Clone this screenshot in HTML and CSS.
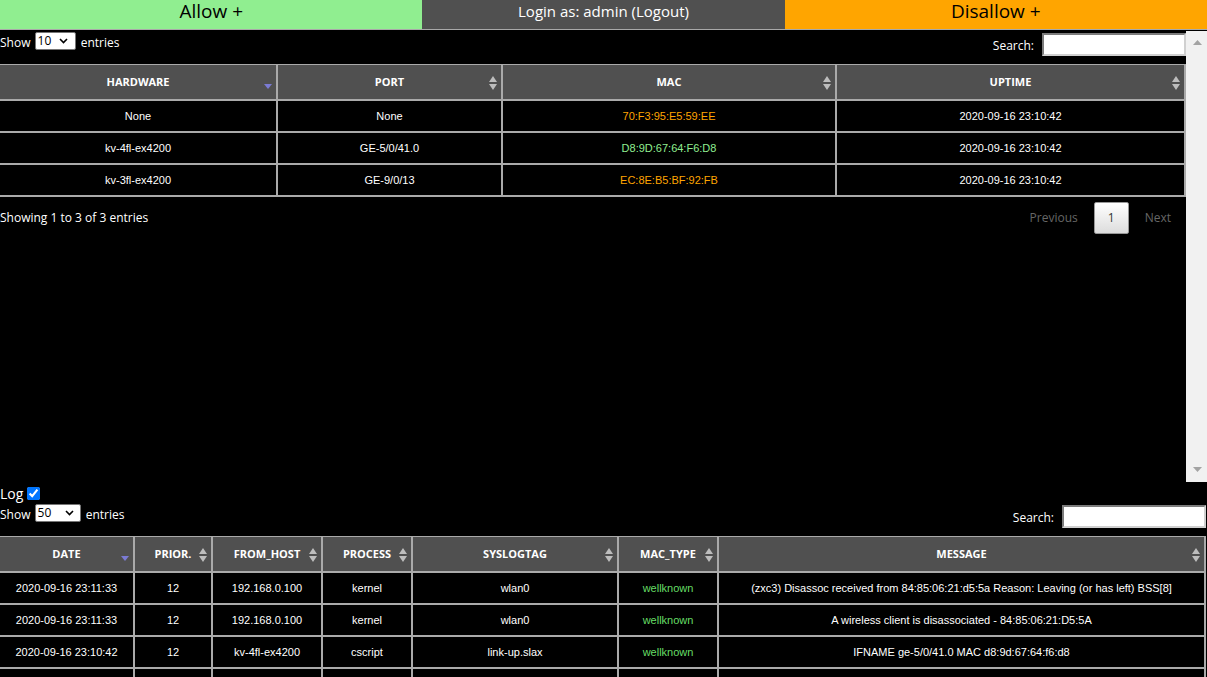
FILE: index.html
```html
<!DOCTYPE html>
<html>
<head>
<meta charset="utf-8">
<title>MAC control</title>
<link rel="stylesheet" href="styles.css">
</head>
<body>
<table class="topbar">
  <tr>
    <td class="allow">Allow +</td>
    <td class="login">Login as: admin (Logout)</td>
    <td class="disallow">Disallow +</td>
  </tr>
</table>

<div class="frame">
  <div class="frame-content">
    <div class="dt-controls">
      <div class="dt-length">Show
        <span class="sel sel-10"><select><option>10</option></select>
          <svg class="chev" width="9" height="6" viewBox="0 0 9 6"><path d="M1 1 L4.5 4.5 L8 1" fill="none" stroke="#000" stroke-width="1.6"/></svg>
        </span> entries</div>
      <div class="dt-filter"><label>Search:</label><input type="search"></div>
    </div>
    <table class="dt t1">
      <colgroup><col style="width:278px"><col style="width:225px"><col style="width:334px"><col style="width:349px"></colgroup>
      <thead>
        <tr>
          <th>HARDWARE<span class="sort"><svg width="8" height="14" viewBox="0 0 8 14"><path d="M0 8 H8 L4 13 Z" fill="#7b7bd4"/></svg></span></th>
          <th>PORT<span class="sort"><svg width="8" height="14" viewBox="0 0 8 14"><path d="M4 0 L8 6 H0 Z M0 8 H8 L4 14 Z" fill="#bdbdbd"/></svg></span></th>
          <th>MAC<span class="sort"><svg width="8" height="14" viewBox="0 0 8 14"><path d="M4 0 L8 6 H0 Z M0 8 H8 L4 14 Z" fill="#bdbdbd"/></svg></span></th>
          <th>UPTIME<span class="sort"><svg width="8" height="14" viewBox="0 0 8 14"><path d="M4 0 L8 6 H0 Z M0 8 H8 L4 14 Z" fill="#bdbdbd"/></svg></span></th>
        </tr>
      </thead>
      <tbody>
        <tr><td>None</td><td>None</td><td class="orange">70:F3:95:E5:59:EE</td><td>2020-09-16 23:10:42</td></tr>
        <tr><td>kv-4fl-ex4200</td><td>GE-5/0/41.0</td><td class="green">D8:9D:67:64:F6:D8</td><td>2020-09-16 23:10:42</td></tr>
        <tr><td>kv-3fl-ex4200</td><td>GE-9/0/13</td><td class="orange">EC:8E:B5:BF:92:FB</td><td>2020-09-16 23:10:42</td></tr>
      </tbody>
    </table>
    <div class="dt-footer">
      <div class="dt-info">Showing 1 to 3 of 3 entries</div>
      <div class="dt-paginate">
        <span class="pg disabled">Previous</span><span class="pg current">1</span><span class="pg disabled">Next</span>
      </div>
    </div>
  </div>
  <div class="scrollbar">
    <svg width="9" height="5" viewBox="0 0 9 5"><path d="M4.5 0 L9 5 H0 Z" fill="#a3a3a3"/></svg>
    <svg width="9" height="5" viewBox="0 0 9 5"><path d="M0 0 H9 L4.5 5 Z" fill="#a3a3a3"/></svg>
  </div>
</div>

<div class="log-line">Log <input type="checkbox" checked></div>
<div class="dt-controls wide">
  <div class="dt-length">Show
    <span class="sel sel-50"><select><option>50</option></select>
      <svg class="chev" width="9" height="6" viewBox="0 0 9 6"><path d="M1 1 L4.5 4.5 L8 1" fill="none" stroke="#000" stroke-width="1.6"/></svg>
    </span> entries</div>
  <div class="dt-filter"><label>Search:</label><input type="search"></div>
</div>
<table class="dt t2">
  <colgroup><col style="width:135px"><col style="width:78px"><col style="width:110px"><col style="width:90px"><col style="width:206px"><col style="width:100px"><col style="width:487px"></colgroup>
  <thead>
    <tr>
      <th>DATE<span class="sort"><svg width="8" height="14" viewBox="0 0 8 14"><path d="M0 8 H8 L4 13 Z" fill="#7b7bd4"/></svg></span></th>
      <th>PRIOR.<span class="sort"><svg width="8" height="14" viewBox="0 0 8 14"><path d="M4 0 L8 6 H0 Z M0 8 H8 L4 14 Z" fill="#bdbdbd"/></svg></span></th>
      <th>FROM_HOST<span class="sort"><svg width="8" height="14" viewBox="0 0 8 14"><path d="M4 0 L8 6 H0 Z M0 8 H8 L4 14 Z" fill="#bdbdbd"/></svg></span></th>
      <th>PROCESS<span class="sort"><svg width="8" height="14" viewBox="0 0 8 14"><path d="M4 0 L8 6 H0 Z M0 8 H8 L4 14 Z" fill="#bdbdbd"/></svg></span></th>
      <th>SYSLOGTAG<span class="sort"><svg width="8" height="14" viewBox="0 0 8 14"><path d="M4 0 L8 6 H0 Z M0 8 H8 L4 14 Z" fill="#bdbdbd"/></svg></span></th>
      <th>MAC_TYPE<span class="sort"><svg width="8" height="14" viewBox="0 0 8 14"><path d="M4 0 L8 6 H0 Z M0 8 H8 L4 14 Z" fill="#bdbdbd"/></svg></span></th>
      <th>MESSAGE<span class="sort"><svg width="8" height="14" viewBox="0 0 8 14"><path d="M4 0 L8 6 H0 Z M0 8 H8 L4 14 Z" fill="#bdbdbd"/></svg></span></th>
    </tr>
  </thead>
  <tbody>
    <tr><td>2020-09-16 23:11:33</td><td>12</td><td>192.168.0.100</td><td>kernel</td><td>wlan0</td><td class="green2">wellknown</td><td>(zxc3) Disassoc received from 84:85:06:21:d5:5a Reason: Leaving (or has left) BSS[8]</td></tr>
    <tr><td>2020-09-16 23:11:33</td><td>12</td><td>192.168.0.100</td><td>kernel</td><td>wlan0</td><td class="green2">wellknown</td><td>A wireless client is disassociated - 84:85:06:21:D5:5A</td></tr>
    <tr><td>2020-09-16 23:10:42</td><td>12</td><td>kv-4fl-ex4200</td><td>cscript</td><td>link-up.slax</td><td class="green2">wellknown</td><td>IFNAME ge-5/0/41.0 MAC d8:9d:67:64:f6:d8</td></tr>
    <tr><td>&nbsp;</td><td>&nbsp;</td><td>&nbsp;</td><td>&nbsp;</td><td>&nbsp;</td><td>&nbsp;</td><td>&nbsp;</td></tr>
  </tbody>
</table>
</body>
</html>
```

FILE: styles.css
```css
* { box-sizing: border-box; }

html, body {
  margin: 0;
  padding: 0;
  background: #000;
  color: #fff;
  overflow: hidden;
  font-family: "Open Sans", "Noto Sans", sans-serif;
  font-size: 12px;
}

/* top bar */
.topbar {
  width: 100%;
  border-collapse: collapse;
  table-layout: fixed;
  border-bottom: 1px solid #a9a9a9;
}
.topbar td {
  height: 29px;
  padding: 0;
  text-align: center;
  vertical-align: top;
  line-height: 22px;
}
.allow { width: 35%; background: #90ee90; color: #000; font-size: 19px; }
.login { width: 30%; background: #505050; color: #fff; font-size: 15px; }
.disallow { width: 35%; background: #ffa500; color: #000; font-size: 19px; }

/* frame */
.frame {
  display: flex;
  height: 451px;
  margin-top: 1px;
}
.frame-content {
  width: 1186px;
  flex: none;
}
.scrollbar {
  width: 21px;
  background: #f1f1f1;
  display: flex;
  flex-direction: column;
  justify-content: space-between;
  align-items: center;
  padding: 9px 0 10px 1px;
}

/* datatables controls */
.dt-controls {
  display: flex;
  justify-content: space-between;
  align-items: flex-start;
  height: 33px;
  width: 1186px;
}
.dt-controls.wide { width: 1207px; padding-right: 1px; }
.dt-length {
  padding-top: 3px;
  line-height: 18px;
  white-space: nowrap;
}
.sel {
  position: relative;
  display: inline-block;
  vertical-align: top;
  height: 18px;
  margin: -2px 2px 0 1px;
}
.sel select {
  display: block;
  appearance: none;
  -webkit-appearance: none;
  height: 18px;
  border: 1px solid #767676;
  border-radius: 2px;
  background: #fff;
  color: #000;
  font-family: "Open Sans", "Noto Sans", sans-serif;
  font-size: 12px;
  padding: 0 0 0 2px;
  margin: 0;
  line-height: 16px;
}
.sel-10 select { width: 41px; }
.sel-50 select { width: 46px; }
.chev {
  position: absolute;
  top: 6px;
  pointer-events: none;
}
.sel-10 .chev { right: 8px; }
.sel-50 .chev { right: 7px; }

.dt-filter {
  display: flex;
  align-items: center;
  padding-top: 2px;
  gap: 8px;
}
.dt-filter label { position: relative; top: 1px; }
.dt-filter input {
  width: 144px;
  height: 23px;
  margin: 0;
  border: 2px inset #d0d0d0;
  background: #fff;
  padding: 0 2px;
}

/* tables */
.dt {
  border-collapse: separate;
  border-spacing: 0;
  table-layout: fixed;
}
.t1 { width: 1186px; }
.t2 { width: 1206px; }
.dt th {
  position: relative;
  height: 37px;
  padding: 0;
  background: #505050;
  color: #fff;
  font-family: "Open Sans", "Noto Sans", sans-serif;
  font-weight: bold;
  font-size: 11px;
  text-align: center;
  border-top: 1px solid #aaa;
  border-bottom: 2px solid #aaa;
  border-right: 2px solid #aaa;
}
.dt td {
  height: 32px;
  padding: 0;
  text-align: center;
  font-family: "Liberation Sans", Arial, sans-serif;
  font-size: 11px;
  color: #fff;
  border-bottom: 2px solid #aaa;
  border-right: 2px solid #aaa;
  white-space: nowrap;
}
.sort {
  position: absolute;
  right: 4px;
  top: 11px;
  line-height: 0;
}
.orange { color: #ffa500 !important; }
.green { color: #90ee90 !important; }
.green2 { color: #66dd66 !important; }

/* footer */
.dt-footer {
  display: flex;
  justify-content: space-between;
  align-items: flex-start;
}
.dt-info {
  padding-top: 12px;
  font-size: 12px;
}
.dt-paginate {
  display: flex;
  padding-top: 5px;
  padding-right: 1px;
}
.pg {
  display: inline-block;
  padding: 7px 13px;
  margin-left: 2px;
  border: 1px solid transparent;
  border-radius: 2px;
  line-height: 16px;
  font-size: 12px;
}
.pg.disabled { color: #666; }
.pg.current {
  color: #333;
  border: 1px solid #979797;
  background: linear-gradient(to bottom, #fff 0%, #dcdcdc 100%);
}

/* log */
.log-line {
  height: 21px;
  padding-top: 2px;
  font-size: 14px;
  line-height: 19px;
  display: flex;
  align-items: center;
}
.log-line input {
  width: 13px;
  height: 13px;
  margin: 0 0 0 4px;
  accent-color: #0075ff;
}
```
